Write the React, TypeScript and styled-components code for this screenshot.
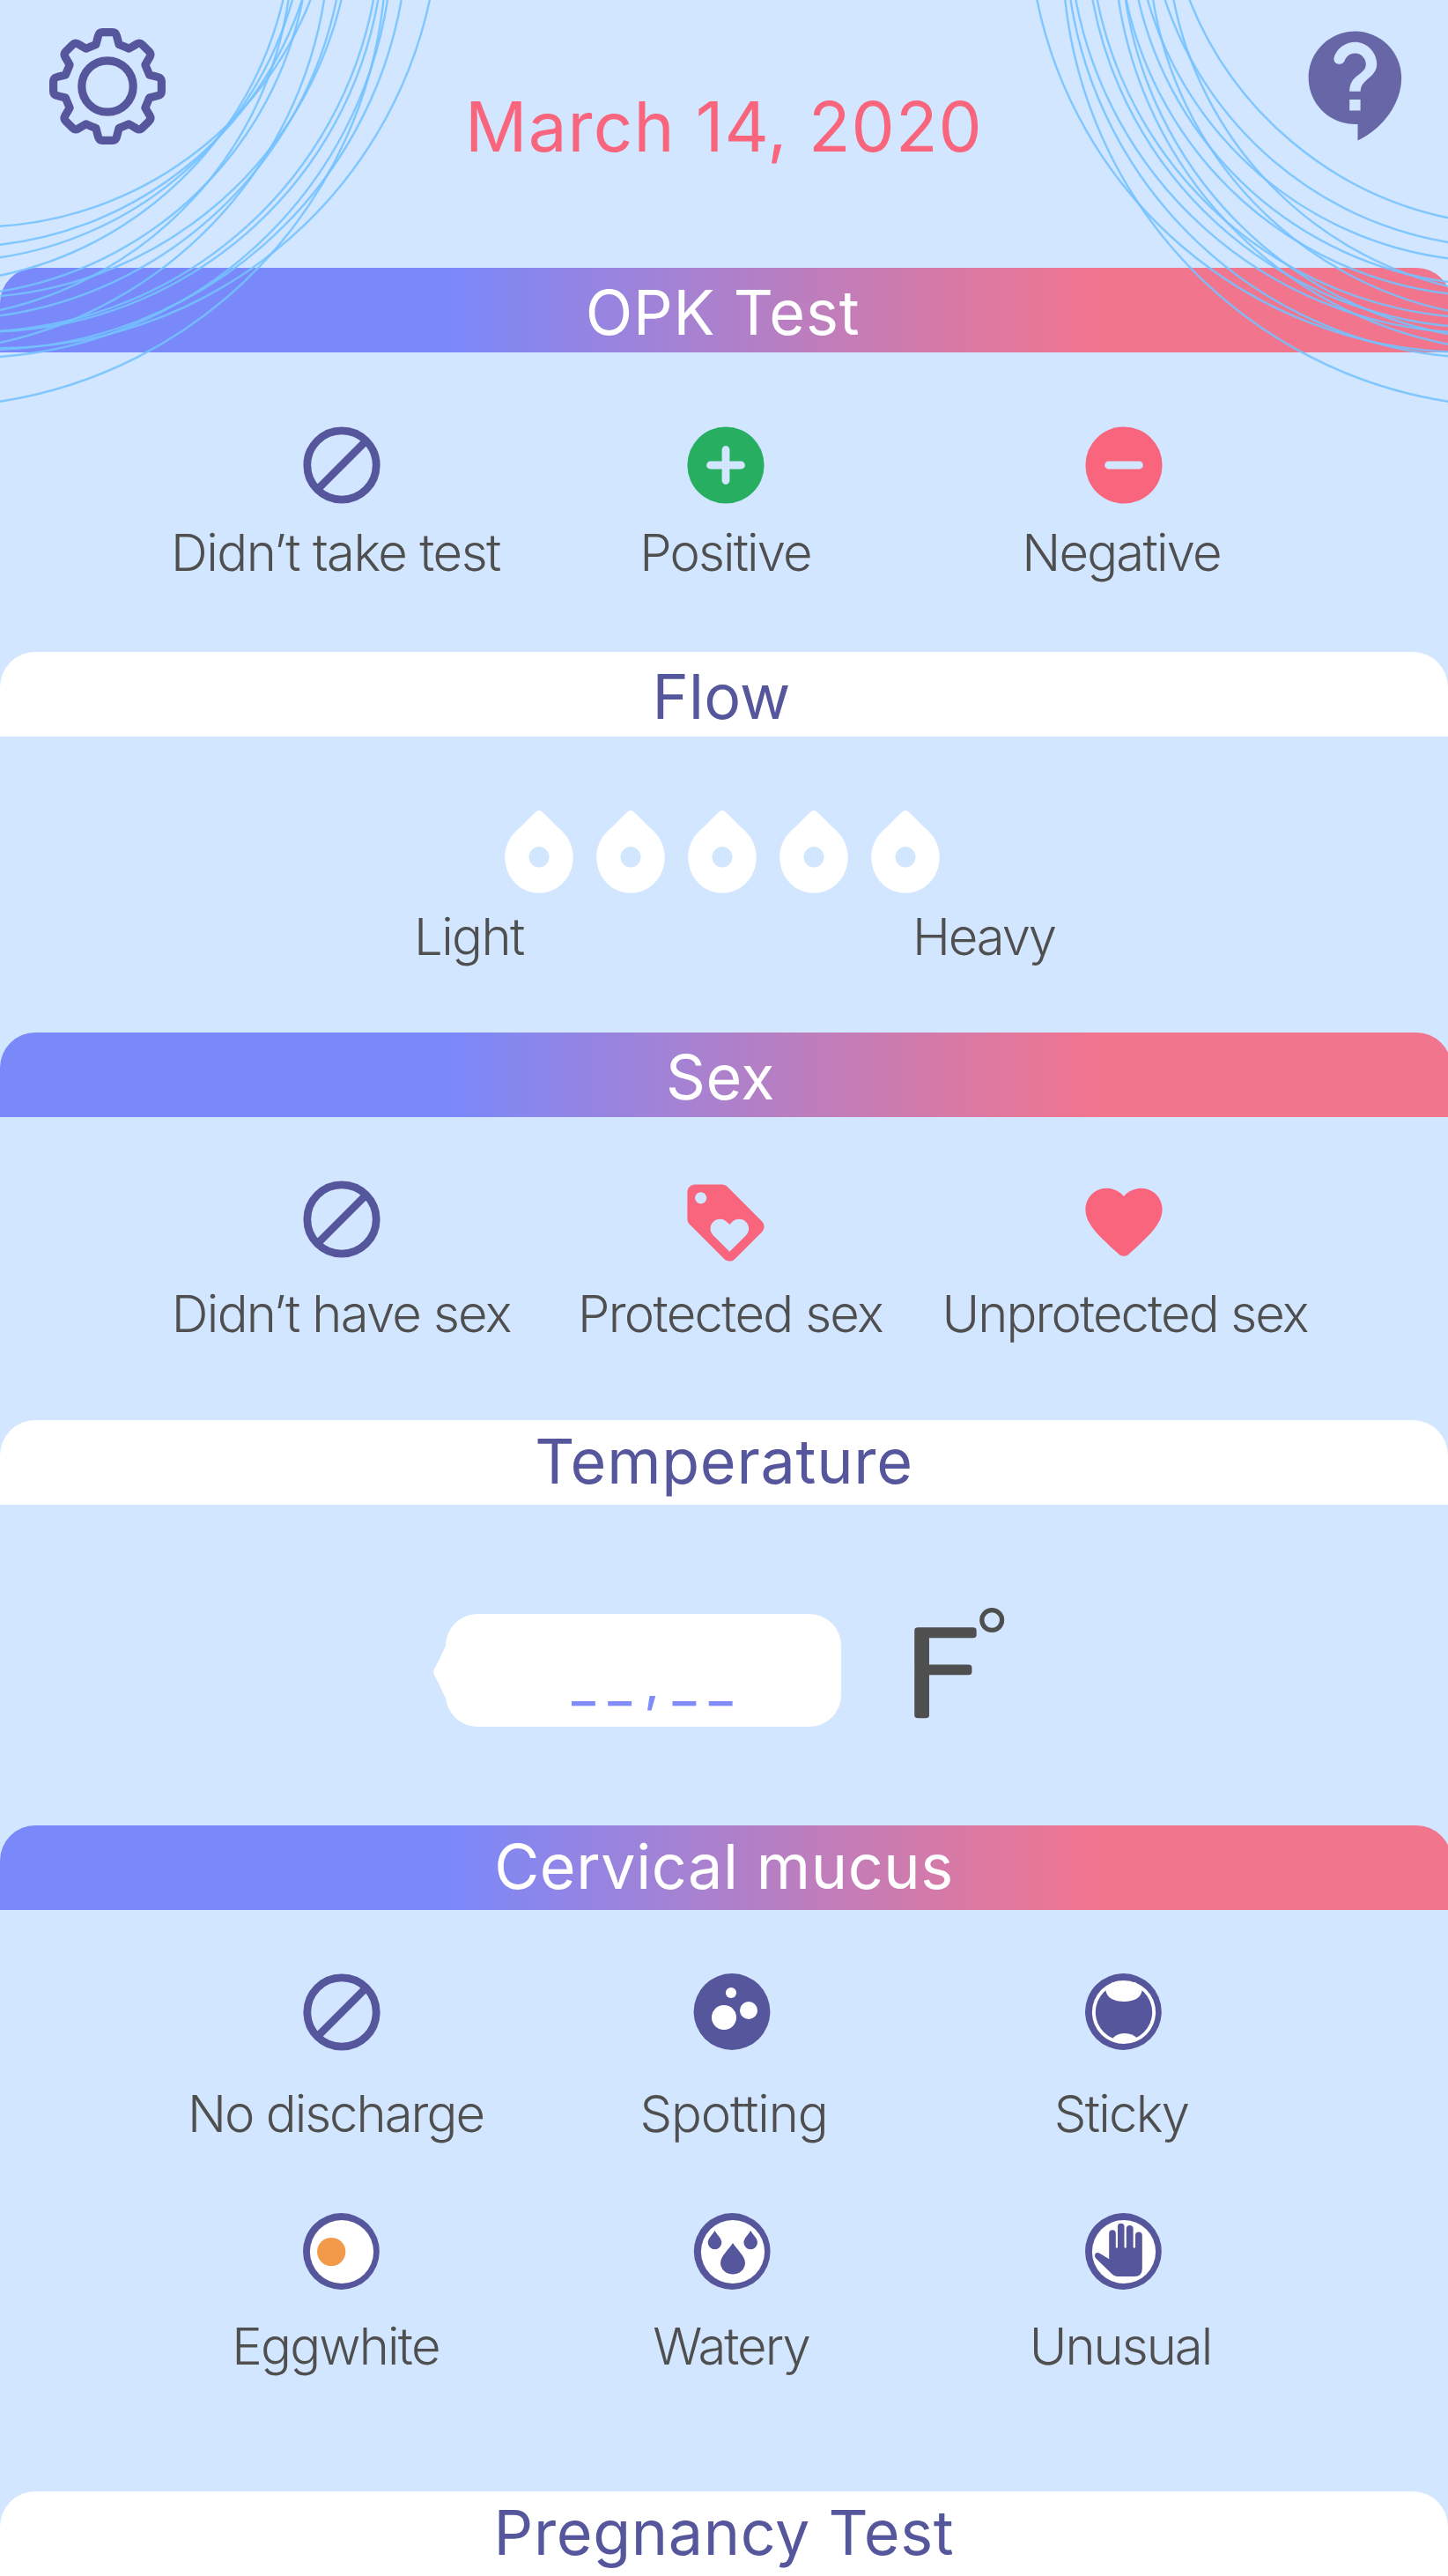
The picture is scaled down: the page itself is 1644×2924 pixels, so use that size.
import React from "react";
import styled, { createGlobalStyle } from "styled-components";

const INK = "#56569d";
const PINK = "#f8657c";
const TEXT = "#4f4f4f";
const SKY = "#d2e6ff";

const GlobalStyle = createGlobalStyle`
  *, *::before, *::after { box-sizing: border-box; }
  body { margin: 0; background: ${SKY}; }
`;

const Screen = styled.main`
  position: relative;
  display: flex;
  flex-direction: column;
  width: 1644px;
  height: 2924px;
  overflow: hidden;
  background: ${SKY};
  font-family: Inter, "Liberation Sans", sans-serif;
`;

const TopBar = styled.header`
  display: grid;
  grid-template-columns: 1fr auto 1fr;
  align-items: start;
  height: 304px;
  padding: 23px 28px 0 54px;
`;

const IconButton = styled.button<{ $side: "start" | "end"; $top?: number }>`
  display: block;
  justify-self: ${(p) => p.$side};
  margin-top: ${(p) => p.$top ?? 0}px;
  padding: 0;
  border: 0;
  background: none;
  svg { display: block; overflow: visible; }
`;

const DateTitle = styled.h1`
  margin: 74px 26px 0 0;
  font-size: 78px;
  line-height: 94px;
  font-weight: 400;
  letter-spacing: 1.1px;
  color: ${PINK};
  white-space: nowrap;
`;

const Rings = styled.svg`
  position: absolute;
  inset: 0 0 auto 0;
  pointer-events: none;
`;

const Section = styled.section<{ $height: number }>`
  flex: none;
  height: ${(p) => p.$height}px;
`;

const SectionTitle = styled.h2<{ $tone: "gradient" | "white"; $line: number; $track?: number; $nudge?: number }>`
  height: 96px;
  width: ${(p) => (p.$tone === "white" ? 1644 : 1648)}px;
  margin: 0;
  padding-right: ${(p) => (p.$nudge ?? 0) + (p.$tone === "white" ? 0 : 4)}px;
  border-radius: 40px 40px 0 0;
  text-align: center;
  font-size: 70px;
  line-height: ${(p) => p.$line}px;
  font-weight: 400;
  letter-spacing: ${(p) => p.$track ?? 1}px;
  color: ${(p) => (p.$tone === "white" ? INK : "#fff")};
  background: ${(p) =>
    p.$tone === "white" ? "#fff" : "linear-gradient(90deg, #7989fa 30.6%, #f2758e 75.6%)"};
`;

const OptionGrid = styled.div<{ $top: number }>`
  display: grid;
  grid-template-columns: 440px 440px 456px;
  row-gap: 77px;
  padding: ${(p) => p.$top}px 0 0 168px;
`;

const Option = styled.div<{ $gap: number }>`
  display: flex;
  flex-direction: column;
  align-items: center;
  gap: ${(p) => p.$gap}px;
`;

const IconSlot = styled.span<{ $shift?: number }>`
  display: block;
  height: 88px;
  margin-left: ${(p) => 2 * (p.$shift ?? 0)}px;
  svg { display: block; overflow: visible; }
`;

const Label = styled.span<{ $track?: number; $shift?: number }>`
  margin-left: ${(p) => 2 * (p.$shift ?? 0)}px;
  font-size: 58px;
  line-height: 72px;
  font-weight: 300;
  letter-spacing: ${(p) => p.$track ?? -2}px;
  color: ${TEXT};
  white-space: nowrap;
`;

const FlowPanel = styled.div`
  padding-top: 84px;
`;

const Drops = styled.div`
  display: flex;
  gap: 26px;
  padding-left: 573px;
  svg { display: block; }
`;

const FlowScale = styled.div`
  display: flex;
  justify-content: space-between;
  width: 728px;
  margin: 13px 0 0 470px;
`;

const TemperatureRow = styled.div`
  display: flex;
  align-items: flex-start;
  padding: 124px 0 0 506px;
`;

const Entry = styled.div`
  position: relative;
  width: 449px;
  height: 128px;
  padding: 42px 0 0 143px;
  border-radius: 36px;
  background: #fff;
  font-size: 58px;
  line-height: 72px;
  font-weight: 500;
  letter-spacing: 14.4px;
  color: #7f8cfa;
  white-space: nowrap;

  &::before {
    content: "";
    position: absolute;
    left: -14px;
    top: 34px;
    width: 15px;
    height: 64px;
    background: #fff;
    clip-path: polygon(100% 0, 40% 30%, 8% 44%, 0 50%, 8% 56%, 40% 70%, 100% 100%);
  }
`;

const UnitMark = styled.svg`
  display: block;
  overflow: visible;
  margin: -12px 0 0 75px;
`;

function gearPath() {
  const turn = (x: number, y: number, k: number) => {
    const a = (k * Math.PI) / 4;
    const px = x * Math.cos(a) - y * Math.sin(a);
    const py = x * Math.sin(a) + y * Math.cos(a);
    return `${px.toFixed(2)} ${py.toFixed(2)}`;
  };
  let d = "";
  for (let k = 0; k < 8; k++) {
    const p = (x: number, y: number) => turn(x, y, k);
    d += `${k === 0 ? "M" : "L"}${p(-13, -47.6)} L${p(-10.6, -57)} Q${p(-9.6, -61.4)} ${p(-5.5, -61.4)} L${p(5.5, -61.4)} Q${p(9.6, -61.4)} ${p(10.6, -57)} L${p(13, -47.6)} L${p(18.3, -45.4)} `;
  }
  return d + "Z";
}

const GearIcon = () => (
  <svg width="136" height="136" viewBox="-68 -68 136 136" fill="none" stroke={INK} strokeWidth="9.2" strokeLinejoin="round">
    <path d={gearPath()} />
    <circle r="29.2" />
  </svg>
);

const HelpIcon = () => (
  <svg width="149" height="149" viewBox="0 0 24 24" fill="#6767a7">
    <path d="M11.5 2C6.81 2 3 5.81 3 10.5S6.81 19 11.5 19h.5v3c4.86-2.34 8-7 8-11.5C20 5.81 16.19 2 11.5 2zm1 14.5h-2v-2h2v2zm.4-4.78c-.01.01-.02.03-.03.05-.05.08-.1.16-.14.24-.02.03-.03.07-.04.11-.03.07-.06.14-.08.21-.07.21-.1.43-.1.68H10.5c0-.51.08-.94.2-1.3 0-.01 0-.02.01-.03.01-.04.04-.06.05-.1.06-.16.13-.3.22-.44.03-.05.07-.1.1-.15.03-.04.05-.09.08-.12l.01.01c.84-1.1 2.21-1.44 2.32-2.68.09-.98-.61-1.93-1.57-2.13-1.04-.22-1.98.39-2.3 1.28-.14.36-.47.65-.88.65h-.2c-.6 0-1.04-.59-.87-1.17.55-1.82 2.37-3.09 4.43-2.79 1.69.25 3.04 1.64 3.33 3.33.44 2.44-1.63 3.03-2.53 4.35z" />
  </svg>
);

const Disc = ({ children }: { children: React.ReactNode }) => (
  <svg width="88" height="88" viewBox="-44 -44 88 88">{children}</svg>
);

const NoneIcon = () => (
  <Disc>
    <g fill="none" stroke={INK} strokeWidth="8.8">
      <circle r="39.2" />
      <path d="M-27 27 L27 -27" />
    </g>
  </Disc>
);

const PlusIcon = () => (
  <Disc>
    <circle r="43.6" fill="#28ae61" />
    <path d="M-17.5 0H17.5M0 -17.5V17.5" stroke={SKY} strokeWidth="8.8" strokeLinecap="round" />
  </Disc>
);

const MinusIcon = () => (
  <Disc>
    <circle r="43.6" fill={PINK} />
    <path d="M-17.5 0H17.5" stroke={SKY} strokeWidth="8.8" strokeLinecap="round" />
  </Disc>
);

const TagHeartIcon = () => (
  <svg width="88" height="88" viewBox="1.9 0.98 20.2 20.2" fill={PINK}>
    <path d="M21.41 11.58l-9-9C12.05 2.22 11.55 2 11 2H4c-1.1 0-2 .9-2 2v7c0 .55.22 1.05.59 1.42l9 9c.36.36.86.58 1.41.58.55 0 1.05-.22 1.41-.59l7-7c.37-.36.59-.86.59-1.41 0-.55-.23-1.06-.59-1.42zM5.5 7C4.67 7 4 6.33 4 5.5S4.67 4 5.5 4 7 4.67 7 5.5 6.33 7 5.5 7zm11.77 8.27L13 19.54l-4.27-4.27C8.28 14.81 8 14.19 8 13.5c0-1.38 1.12-2.5 2.5-2.5.69 0 1.32.28 1.77.74l.73.72.73-.73c.45-.45 1.08-.73 1.77-.73 1.38 0 2.5 1.12 2.5 2.5 0 .69-.28 1.32-.73 1.77z" />
  </svg>
);

const HeartIcon = () => (
  <svg width="88" height="88" viewBox="1.9 0.98 20.2 20.2" fill={PINK}>
    <path d="M13.35 20.13c-.76.69-1.93.69-2.69-.01l-.11-.1C5.3 15.27 1.87 12.16 2 8.28c.06-1.7.93-3.33 2.34-4.29 2.64-1.8 5.9-.96 7.66 1.1 1.76-2.06 5.02-2.91 7.66-1.1 1.41.96 2.28 2.59 2.34 4.29.14 3.88-3.3 6.99-8.55 11.76l-.1.09z" />
  </svg>
);

const SpottingIcon = () => (
  <Disc>
    <circle cy="-0.5" r="43.4" fill={INK} />
    <g fill="#fff">
      <circle cx="-1" cy="-22" r="6.1" />
      <circle cx="19" cy="-2" r="10" />
      <circle cx="-9" cy="6" r="14" />
    </g>
  </Disc>
);

const Plate = () => (
  <>
    <circle cx="-0.6" cy="-0.5" r="43.4" fill={INK} />
    <circle r="36.1" fill="#fff" />
  </>
);

const StickyIcon = () => (
  <Disc>
    <Plate />
    <circle r="32.2" fill={INK} />
    <path d="M-20.6 -26 C-20.6 -17 -12 -12 0 -12 C12 -12 20.6 -17 20.6 -26 L13 -34 L-13 -34 Z" fill="#fff" />
    <path d="M-13.5 30.5 C-9 25.6 -4 24 1 24 C7 24 12 26 15.5 30 L6 35 L-6 35 Z" fill="#fff" />
  </Disc>
);

const EggIcon = () => (
  <Disc>
    <Plate />
    <circle cx="-11.8" r="16.1" fill="#f2994a" />
  </Disc>
);

const WateryIcon = () => (
  <Disc>
    <circle cx="-0.8" cy="-0.5" r="43.4" fill={INK} />
    <circle r="36.1" fill="#fff" />
    <g fill={INK}>
      <path d="M0 -10 C4 -3.5 14 5 14 12.5 A14 13 0 0 1 -14 12.5 C-14 5 -4 -3.5 0 -10Z" />
      <path d="M-20.5 -24 C-17.5 -19 -12.7 -15 -12.7 -10.5 A7.8 7.8 0 0 1 -28.3 -10.5 C-28.3 -15 -23.5 -19 -20.5 -24Z" />
      <path d="M20.2 -24 C23.2 -19 28 -15 28 -10.5 A7.8 7.8 0 0 1 12.4 -10.5 C12.4 -15 17.2 -19 20.2 -24Z" />
    </g>
  </Disc>
);

const HandIcon = () => (
  <Disc>
    <Plate />
    <path
      fill={INK}
      d="M-16.8 8.2 V-21 A3.8 3.8 0 0 1 -9.2 -21 V-5 Q-8.2 -3.4 -7 -5 V-28.6 A3.7 3.7 0 0 1 0.5 -28.6 V-5 Q1.6 -3.4 2.8 -5 V-26 A3.9 3.9 0 0 1 10.6 -26 V-5 Q11.8 -3.4 13 -5 V-18.5 A3.9 3.9 0 0 1 20.8 -18.5 V19 Q20.8 28 12 28 H-7.5 Q-11 28 -13.5 25.3 L-31.5 7.8 C-35 4 -32 -1 -27 2Z"
    />
  </Disc>
);

const DropIcon = () => (
  <svg width="78" height="94" viewBox="0 0 78 94">
    <path
      fill="#fff"
      fillRule="evenodd"
      d="M35.5 1.4 Q39 -1.4 42.5 1.4 C49 7 55 14 62 20.5 C71 28.5 77.7 38 77.7 53 C77.7 76 60.5 93.7 39 93.7 S0.3 76 0.3 53 C0.3 38 7 28.5 16 20.5 C23 14 29 7 35.5 1.4Z M39 41.1 a11.5 11.7 0 1 0 0.01 0Z"
    />
  </svg>
);

// Each arc is [distance along the top edge, distance down the side edge, radius].
const LEFT_ARCS = [
  [352.5, 256.7, 407], [343, 277.7, 411], [332, 292.3, 408], [321.4, 312.7, 417],
  [343.5, 330.7, 418], [327.5, 352, 425], [387.5, 336, 439], [382, 358.3, 455],
  [368, 389, 475], [424, 375.7, 462], [429.3, 376.3, 455], [440, 405, 480],
  [455.7, 396.7, 480], [487.9, 395, 500], [435.5, 455.7, 517],
];
const RIGHT_ARCS = [
  [293.5, 247.3, 406], [321.2, 275, 410], [341, 293.3, 410], [351.4, 320, 418],
  [311.5, 325, 418], [365.3, 333.3, 425], [334.8, 352.7, 430], [398.3, 359, 450],
  [403.5, 370, 455], [422.6, 376.7, 465], [428.5, 404.3, 480], [374, 390.7, 470],
  [366, 379, 455], [466.6, 399.3, 500], [434.7, 455.7, 517],
];
const arc = ([x, y, r]: number[]) => `M${x} 0A${r} ${r} 0 0 1 0 ${y}`;

export default function App() {
  return (
    <>
      <GlobalStyle />
      <Screen>
        <TopBar>
          <IconButton $side="start" $top={7} aria-label="Settings"><GearIcon /></IconButton>
          <DateTitle>March 14, 2020</DateTitle>
          <IconButton $side="end" aria-label="Help"><HelpIcon /></IconButton>
        </TopBar>

        <Section $height={436}>
          <SectionTitle $tone="gradient" $line={101} $track={0.8} $nudge={3}>OPK Test</SectionTitle>
          <OptionGrid $top={84}>
            <Option $gap={19}>
              <IconSlot><NoneIcon /></IconSlot>
              <Label $shift={-7} $track={-1.5}>Didn’t take test</Label>
            </Option>
            <Option $gap={19}>
              <IconSlot $shift={-4}><PlusIcon /></IconSlot>
              <Label $shift={-4.5} $track={-1.9}>Positive</Label>
            </Option>
            <Option $gap={19}>
              <IconSlot><MinusIcon /></IconSlot>
              <Label $shift={-3} $track={-1.8}>Negative</Label>
            </Option>
          </OptionGrid>
        </Section>

        <Section $height={432}>
          <SectionTitle $tone="white" $line={101} $track={0.2} $nudge={6}>Flow</SectionTitle>
          <FlowPanel>
            <Drops>
              {[1, 2, 3, 4, 5].map((level) => <DropIcon key={level} />)}
            </Drops>
            <FlowScale>
              <Label $track={-1.6}>Light</Label>
              <Label $track={-2.1}>Heavy</Label>
            </FlowScale>
          </FlowPanel>
        </Section>

        <Section $height={440}>
          <SectionTitle $tone="gradient" $line={101} $track={0.6} $nudge={8}>Sex</SectionTitle>
          <OptionGrid $top={72}>
            <Option $gap={27}>
              <IconSlot><NoneIcon /></IconSlot>
              <Label $shift={-0.7} $track={-1.7}>Didn’t have sex</Label>
            </Option>
            <Option $gap={27}>
              <IconSlot $shift={-4}><TagHeartIcon /></IconSlot>
              <Label $shift={1} $track={-1.7}>Protected sex</Label>
            </Option>
            <Option $gap={27}>
              <IconSlot><HeartIcon /></IconSlot>
              <Label $shift={1} $track={-1.9}>Unprotected sex</Label>
            </Option>
          </OptionGrid>
        </Section>

        <Section $height={460}>
          <SectionTitle $tone="white" $line={93} $track={0.75}>Temperature</SectionTitle>
          <TemperatureRow>
            <Entry>__,__</Entry>
            <UnitMark width="112" height="140" viewBox="0 0 112 140">
              <text
                transform="translate(-8 127.2) scale(1.28 1)"
                fontFamily="'DejaVu Sans', Inter, sans-serif"
                fontWeight="200"
                fontSize="131"
                fill={TEXT}
                stroke={TEXT}
                strokeWidth="6.6"
                strokeLinejoin="round"
              >
                F
              </text>
              <circle cx="96.2" cy="19" r="11.4" fill="none" stroke={TEXT} strokeWidth="5.2" />
            </UnitMark>
          </TemperatureRow>
        </Section>

        <Section $height={756}>
          <SectionTitle $tone="gradient" $line={93} $track={0.6}>Cervical mucus</SectionTitle>
          <OptionGrid $top={72}>
            <Option $gap={35}>
              <IconSlot><NoneIcon /></IconSlot>
              <Label $shift={-7}>No discharge</Label>
            </Option>
            <Option $gap={35}>
              <IconSlot $shift={3}><SpottingIcon /></IconSlot>
              <Label $shift={5} $track={-1.1}>Spotting</Label>
            </Option>
            <Option $gap={35}>
              <IconSlot><StickyIcon /></IconSlot>
              <Label $shift={-3} $track={-1.7}>Sticky</Label>
            </Option>
            <Option $gap={27}>
              <IconSlot><EggIcon /></IconSlot>
              <Label $shift={-7} $track={-1.8}>Eggwhite</Label>
            </Option>
            <Option $gap={27}>
              <IconSlot $shift={4}><WateryIcon /></IconSlot>
              <Label $shift={2}>Watery</Label>
            </Option>
            <Option $gap={27}>
              <IconSlot><HandIcon /></IconSlot>
              <Label $shift={-4}>Unusual</Label>
            </Option>
          </OptionGrid>
        </Section>

        <Section $height={96}>
          <SectionTitle $tone="white" $line={93} $track={0.65}>Pregnancy Test</SectionTitle>
        </Section>

        <Rings width="1644" height="480" viewBox="0 0 1644 480" fill="none" stroke="#74c1ff" strokeOpacity="0.88" strokeWidth="2.4">
          <g>{LEFT_ARCS.map((a, i) => <path key={i} d={arc(a)} />)}</g>
          <g transform="translate(1644 0) scale(-1 1)">{RIGHT_ARCS.map((a, i) => <path key={i} d={arc(a)} />)}</g>
        </Rings>
      </Screen>
    </>
  );
}
